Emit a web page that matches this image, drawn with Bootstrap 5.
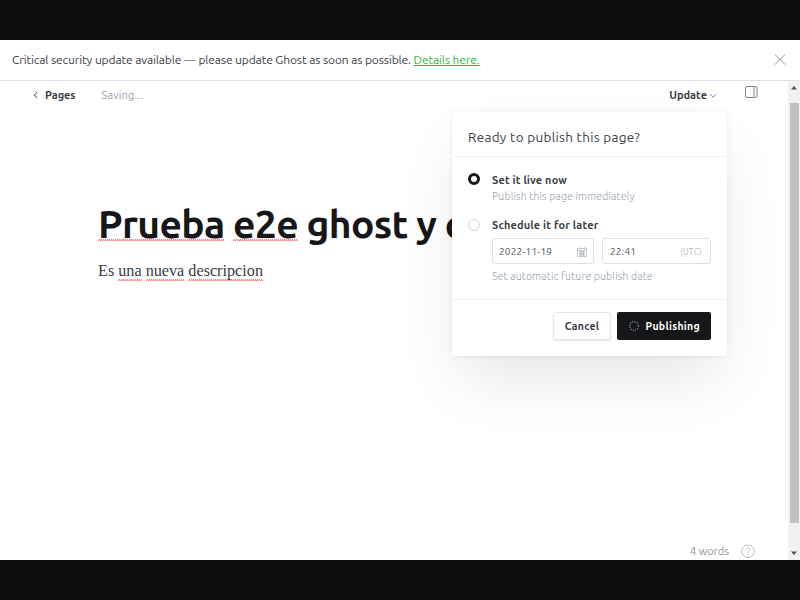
<!DOCTYPE html>
<html lang="es">
<head>
<meta charset="utf-8">
<meta name="viewport" content="width=device-width, initial-scale=1">
<title>Ghost editor</title>
<link rel="stylesheet" href="https://cdn.jsdelivr.net/npm/bootstrap@5.3.0/dist/css/bootstrap.min.css">
<style>
body{width:800px;height:600px;font-family:Ubuntu,"Noto Sans","Open Sans",sans-serif;font-size:11px;line-height:16px;color:#394047;background:#fff}
.frame-bar{height:40px;background:#0d0d0d}
.notice{height:41px;padding:0 14px 1px 12px;border-bottom:1px solid #dfe1e3;font-size:12px;letter-spacing:-.12px}
.notice a{color:#30b93f}
.editor-head{height:28px;padding:0 30px 1px 33px}
.back-icon{margin-right:7px}
.back-link{font-weight:600;letter-spacing:-.05px}
.saving{margin-left:26px;color:#95a1ad;letter-spacing:.15px}
.update-btn{font-weight:600;margin-right:27px;gap:2px}
.caret-icon{margin-top:2px}
.panel-icon{margin-top:-5px}
.post{padding:92px 0 0 98px}
.post h1{font-size:39px;line-height:46px;font-weight:700;color:#15171a;margin:0 0 11px;white-space:nowrap;letter-spacing:-.68px}
.post p{font:16.2px/26px "Liberation Serif",serif;margin:0}
.misspelt{padding-bottom:1px;background:repeating-linear-gradient(90deg,#ff7a7a 0 1px,#ffc9c9 1px 2px) 0 100%/100% 1px no-repeat,repeating-linear-gradient(90deg,#ffe2e2 0 1px,#ff8080 1px 2px) 0 calc(100% - 1px)/100% 1px no-repeat}
h1 .misspelt{padding-bottom:0;background-position:0 calc(100% - 4px),0 calc(100% - 5px)}
.publish-menu{left:452px;top:31px;width:275px;height:244px;border-radius:3px;background:#fff;box-shadow:0 0 7px rgba(0,0,0,.06),0 2px 3px rgba(0,0,0,.02),0 30px 60px -8px rgba(0,0,0,.1)}
.menu-title{height:45px;padding:5px 16px 0;border-bottom:1px solid #eff1f2;font-size:13.5px;letter-spacing:.3px}
.menu-options{height:142px;padding:15px 16px 0}
.choice{gap:12px}
.second-choice{margin-top:13px}
.dot{width:12px;height:12px;margin-top:2px;border:1px solid #d5dadf;border-radius:50%;flex:none}
.dot.on{border:3.5px solid #15171a;margin-top:1px}
.choice-label{font-weight:600;line-height:16px;letter-spacing:.15px}
.hint{color:#94a2b0;font-weight:300;font-size:10.5px;line-height:16px;letter-spacing:.14px}
.field-row{gap:8px;margin:5px 0 4px}
.field{height:26px;border:1px solid #dde1e5;border-radius:3px;padding:1px 6px 0;font-size:10px;color:#48535e;letter-spacing:.23px}
.field-date{width:102px}
.field-time{width:109px;padding:1px 8px 0 7px}
.field small{font-size:8.5px;color:#b5bec6}
.menu-actions{height:57px;padding:12px 16px;gap:6px;border-top:1px solid #eff1f2}
.act{height:28px;border-radius:2px;font-size:10.5px;font-weight:600;padding:0 11px;letter-spacing:.3px}
.act-plain{width:58px;border:1px solid #e5e9ed;box-shadow:0 1px 2px rgba(0,0,0,.1);background:#fff;color:#394047}
.act-dark{width:94px;background:#15171a;color:#fff}
.status{padding:0 33px 0 0;height:18px;gap:12px;color:#8493a1}
.scroll{width:12px;padding:4px 0;background:#f1f1f1}
.scroll-thumb{width:9px;height:420px;margin-top:13px;background:#c1c1c1}
</style>
<script src="https://cdn.jsdelivr.net/npm/bootstrap@5.3.0/dist/js/bootstrap.bundle.min.js"></script>
</head>
<body class="d-flex flex-column overflow-hidden">
<div class="frame-bar flex-shrink-0"></div>
<div class="notice d-flex align-items-center justify-content-between flex-shrink-0">
  <div>Critical security update available — please update Ghost as soon as possible. <a href="#">Details here.</a></div>
  <svg width="12" height="12" viewBox="0 0 12 12" fill="none" stroke="#80858a" stroke-width=".9"><path d="M1 .5l10 10M11 .5L1 10.5"/></svg>
</div>
<div class="d-flex flex-grow-1 position-relative">
  <main class="flex-grow-1 d-flex flex-column overflow-hidden">
    <header class="editor-head d-flex align-items-center flex-shrink-0">
      <svg class="back-icon" width="5" height="8" viewBox="0 0 5 8" fill="none" stroke="#394047"><path d="M4.3 1L1.2 4l3.1 3"/></svg>
      <span class="back-link">Pages</span>
      <span class="saving">Saving...</span>
      <span class="update-btn ms-auto d-flex align-items-center">Update<svg class="caret-icon" width="8" height="6" viewBox="0 0 8 6" fill="none" stroke="#7c8b9a"><path d="M1 1.2l3 3 3-3"/></svg></span>
      <svg class="panel-icon" width="14" height="14" viewBox="0 0 14 14" fill="none" stroke="#7c858d"><rect x="1.5" y="1.5" width="11.5" height="11" rx="1.5"/><path d="M10 1.5v11"/></svg>
    </header>
    <article class="post flex-grow-1">
      <h1><span class="misspelt">Prueba</span> <span class="misspelt">e2e</span> ghost y c</h1>
      <p>Es <span class="misspelt">una</span> <span class="misspelt">nueva</span> <span class="misspelt">descripcion</span></p>
    </article>
    <footer class="status d-flex justify-content-end align-items-center">
      <span>4 words</span>
      <svg width="14" height="14" viewBox="0 0 14 14" fill="none" stroke="#a9b5c0" stroke-width=".9"><circle cx="7" cy="7.3" r="6.2"/><path d="M5.2 5.8a1.8 1.8 0 1 1 2.7 1.5c-.7.4-.9.7-.9 1.4M7 9.8v1"/></svg>
    </footer>
  </main>
  <div class="scroll d-flex flex-column align-items-center flex-shrink-0">
    <svg width="8" height="5" viewBox="0 0 8 5" fill="#505050"><path d="M1 4.5l3-3.5 3 3.5z"/></svg>
    <div class="scroll-thumb"></div>
    <svg class="mt-auto" width="8" height="5" viewBox="0 0 8 5" fill="#505050"><path d="M1 .5L4 4 7 .5z"/></svg>
  </div>
  <section class="publish-menu position-absolute">
    <div class="menu-title d-flex align-items-center">Ready to publish this page?</div>
    <div class="menu-options">
      <div class="choice d-flex"><span class="dot on"></span><div><div class="choice-label">Set it live now</div><div class="hint">Publish this page immediately</div></div></div>
      <div class="choice second-choice d-flex"><span class="dot"></span>
        <div class="flex-grow-1"><div class="choice-label">Schedule it for later</div>
          <div class="field-row d-flex">
            <div class="field field-date d-flex align-items-center justify-content-between">2022-11-19<svg width="10" height="10" viewBox="0 0 10 10" fill="none" stroke="#b4bdc6" stroke-width=".8"><path d="M.5 1.5h9v8h-9zM.5 3.5h9M2.5 0v2.5M7.5 0v2.5M2 5h6M2 6.5h6M2 8h6M3.5 4v5M5 4v5M6.5 4v5"/></svg></div>
            <div class="field field-time d-flex align-items-center justify-content-between">22:41<small>(UTC)</small></div>
          </div>
          <div class="hint">Set automatic future publish date</div></div></div>
    </div>
    <div class="menu-actions d-flex justify-content-end">
      <button class="act act-plain d-flex align-items-center justify-content-center">Cancel</button>
      <button class="act act-dark border-0 d-flex align-items-center justify-content-between"><svg width="12" height="12" viewBox="0 0 12 12" fill="none" stroke="#7d878e" stroke-width="1.7"><circle cx="6" cy="6" r="4.4" stroke-dasharray=".9 1.404"/></svg>Publishing</button>
    </div>
  </section>
</div>
<div class="frame-bar flex-shrink-0"></div>
</body>
</html>
